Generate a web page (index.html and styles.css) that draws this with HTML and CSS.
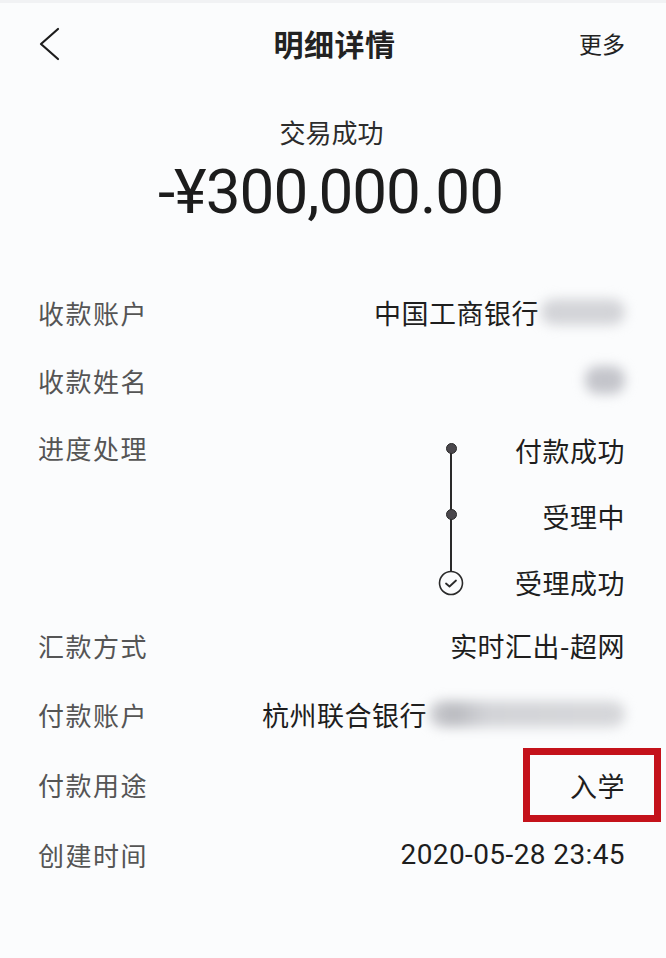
FILE: index.html
```html
<!DOCTYPE html>
<html lang="zh-CN">
<head>
<meta charset="utf-8">
<title>明细详情</title>
<link rel="stylesheet" href="styles.css">
</head>
<body>
<div class="page">
  <header class="topbar">
    <div class="back">
      <svg width="22" height="34" viewBox="0 0 22 34"><polyline points="19,2 2,17 19,32" fill="none" stroke="#1c1c1c" stroke-width="2.2" stroke-linecap="round" stroke-linejoin="round"/></svg>
    </div>
    <div class="title">明细详情</div>
    <div class="more">更多</div>
  </header>

  <section class="summary">
    <div class="status">交易成功</div>
    <div class="amount">-¥300,000.00</div>
  </section>

  <section class="list">
    <div class="row">
      <div class="label">收款账户</div>
      <div class="value"><span>中国工商银行</span><span class="blur blur-acct"></span></div>
    </div>
    <div class="row">
      <div class="label">收款姓名</div>
      <div class="value"><span class="blur blur-name"></span></div>
    </div>
    <div class="row row-progress">
      <div class="label">进度处理</div>
      <div class="steps">
        <div class="step step-first"><div class="marker"><span class="dot"></span></div><div class="step-text">付款成功</div></div>
        <div class="step step-mid"><div class="marker"><span class="dot"></span></div><div class="step-text">受理中</div></div>
        <div class="step step-last"><div class="marker"><span class="check"><svg width="26" height="26" viewBox="0 0 26 26"><circle cx="13" cy="13" r="11.5" fill="#fbfcfd" stroke="#2a2a2a" stroke-width="1.6"/><polyline points="8,13.5 11.5,16.5 18,10.5" fill="none" stroke="#2a2a2a" stroke-width="1.8" stroke-linecap="round" stroke-linejoin="round"/></svg></span></div><div class="step-text">受理成功</div></div>
      </div>
    </div>
    <div class="row row-tight">
      <div class="label">汇款方式</div>
      <div class="value">实时汇出-超网</div>
    </div>
    <div class="row row-wide">
      <div class="label">付款账户</div>
      <div class="value"><span>杭州联合银行</span><span class="blur blur-pay"></span></div>
    </div>
    <div class="row row-wide">
      <div class="label">付款用途</div>
      <div class="value"><span class="highlight">入学</span></div>
    </div>
    <div class="row row-wide">
      <div class="label">创建时间</div>
      <div class="value num">2020-05-28 23:45</div>
    </div>
  </section>
</div>
</body>
</html>
```

FILE: styles.css
```css
* { box-sizing: border-box; }
html, body { margin: 0; padding: 0; }
body {
  background: #fbfcfd;
  font-family: "Noto Sans CJK SC", "Noto Sans", sans-serif;
  color: #1e1e1e;
}
.page {
  width: 666px;
  height: 958px;
  padding: 0 41px 0 38px;
  border-top: 3px solid #f1f2f4;
}
.topbar {
  height: 80px;
  display: flex;
  align-items: center;
  justify-content: space-between;
}
.back { width: 60px; display: flex; align-items: center; padding-left: 1px; padding-top: 1px; }
.title {
  font-size: 30px;
  font-weight: 700;
  color: #222;
  letter-spacing: 0.5px;
  padding-left: 6px;
}
.more {
  width: 60px;
  text-align: right;
  font-size: 23px;
  color: #222;
}
.summary {
  display: flex;
  flex-direction: column;
  align-items: center;
  padding-top: 32px;
  height: 195px;
}
.status {
  font-size: 26px;
  color: #2c2c2c;
  line-height: 34px;
}
.amount {
  font-family: Roboto, "Liberation Sans", sans-serif;
  font-size: 62px;
  letter-spacing: -1px;
  color: #1c1c1c;
  line-height: 66px;
  margin-top: 10px;
  margin-left: -2px;
}
.list { display: flex; flex-direction: column; }
.row {
  height: 68px;
  display: flex;
  align-items: center;
  justify-content: space-between;
}
.row-tight { height: 67px; }
.row-wide { height: 70px; }
.label {
  font-size: 26px;
  color: #555;
  letter-spacing: 1.5px;
}
.value {
  display: flex;
  align-items: center;
  font-size: 27px;
  letter-spacing: 0.5px;
  color: #1e1e1e;
}
.value.num {
  font-family: Roboto, "Liberation Sans", sans-serif;
  font-size: 28px;
  letter-spacing: 0.4px;
}
.blur {
  display: inline-block;
  height: 26px;
  border-radius: 13px;
  background: #c9cad0;
  filter: blur(6px);
}
.blur-acct { width: 84px; margin-left: 2px; background: #d3d4d8; }
.blur-name { width: 40px; height: 28px; background: #c4c5cb; }
.blur-pay {
  width: 196px;
  margin-left: 2px;
  background: linear-gradient(90deg, #cfd0d4 0%, #b9babf 12%, #d2d3d7 30%, #d6d7da 100%);
}
.row-progress {
  height: 198px;
  align-items: flex-start;
}
.row-progress .label { line-height: 68px; }
.steps {
  width: 187px;
  display: flex;
  flex-direction: column;
  padding-top: 3px;
}
.step {
  height: 66px;
  display: flex;
  align-items: center;
}
.marker {
  width: 26px;
  height: 100%;
  position: relative;
  display: flex;
  align-items: center;
  justify-content: center;
}
.marker::before {
  content: "";
  position: absolute;
  left: 12px;
  width: 2px;
  background: #2a2a2a;
}
.step-first .marker::before { top: 50%; bottom: 0; }
.step-mid .marker::before { top: 0; bottom: 0; }
.step-last .marker::before { top: 0; bottom: 50%; }
.dot {
  position: relative;
  width: 11px;
  height: 11px;
  border-radius: 50%;
  background: #4a474c;
  border: 1px solid #2a2a2a;
  margin-top: -4px;
}
.check { position: relative; display: flex; margin-top: 2px; }
.step-text {
  flex: 1;
  text-align: right;
  font-size: 27px;
  color: #1e1e1e;
  letter-spacing: 0.5px;
}
.highlight {
  display: flex;
  align-items: center;
  justify-content: flex-end;
  width: 138px;
  height: 74px;
  border: 7px solid #c4121b;
  padding-right: 29px;
  margin-right: -36px;
  margin-top: 2px;
}
```
